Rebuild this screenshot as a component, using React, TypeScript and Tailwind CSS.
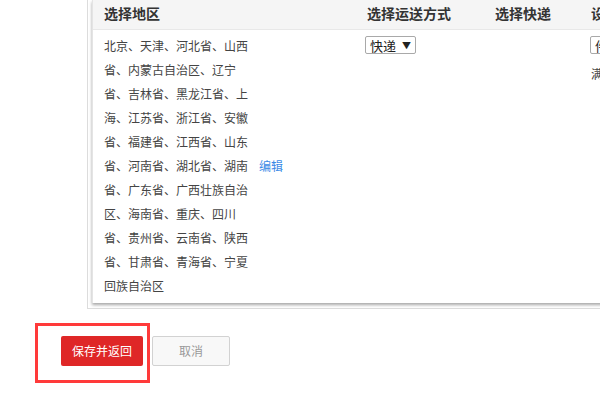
import React from "react";

const regions =
  "北京、天津、河北省、山西省、内蒙古自治区、辽宁省、吉林省、黑龙江省、上海、江苏省、浙江省、安徽省、福建省、江西省、山东省、河南省、湖北省、湖南省、广东省、广西壮族自治区、海南省、重庆、四川省、贵州省、云南省、陕西省、甘肃省、青海省、宁夏回族自治区";

function FakeSelect({ label }: { label: string }) {
  return (
    <div className="inline-flex items-center h-[18px] border border-[#a9a9a9] rounded-[2px] bg-white pl-[4px] pr-[4px] text-[13px] leading-none text-[#222] whitespace-nowrap">
      <span>{label}</span>
      <span className="ml-[6px] text-[9px]">▼</span>
    </div>
  );
}

export default function App() {
  return (
    <div
      className="relative w-[600px] h-[400px] overflow-hidden bg-white"
      style={{ fontFamily: '"Noto Sans CJK SC", "Noto Sans", sans-serif' }}
    >
      {/* outer frame */}
      <div className="ml-[87px] w-[620px] border-l border-b border-[#dcdcdc] pl-[4px] pb-[5px]">
        <div className="bg-white border-l border-[#e4e4e4] shadow-[0_2px_3px_rgba(0,0,0,0.35)]">
          {/* header */}
          <div className="flex h-[30px] bg-[#f5f5f5] border-b border-[#e8e8e8] text-[14px] font-bold text-[#333] pb-[3px] items-center">
            <div className="w-[263px] pl-[11px]">选择地区</div>
            <div className="w-[128px] pl-[11px]">选择运送方式</div>
            <div className="w-[96px] pl-[11px]">选择快递</div>
            <div className="pl-[11px] whitespace-nowrap">设置运费</div>
          </div>
          {/* body row */}
          <div className="flex text-[12px] text-[#444]">
            <div className="w-[263px] pl-[11px] pt-[4px] pb-[5px] flex items-center">
              <div className="w-[150px] leading-[24px]">{regions}</div>
              <a className="ml-[5px] text-[#3b8ae6] cursor-pointer">编辑</a>
            </div>
            <div className="w-[128px] pl-[9px] pt-[6px]">
              <FakeSelect label="快递" />
            </div>
            <div className="w-[96px]" />
            <div className="pl-[10px] pt-[6px] whitespace-nowrap">
              <FakeSelect label="件数" />
              <div className="mt-[10px] pl-[1px]">满 件，运费 元</div>
            </div>
          </div>
        </div>
      </div>

      {/* buttons */}
      <div className="flex gap-[9px] pl-[61px] mt-[27px]">
        <button className="w-[82px] h-[30px] rounded-[2px] bg-[#df2727] text-white text-[12px]">
          保存并返回
        </button>
        <button className="w-[78px] h-[30px] rounded-[2px] bg-[#f8f8f8] border border-[#d2d2d2] text-[#999] text-[12px]">
          取消
        </button>
      </div>

      {/* annotation highlight */}
      <div className="absolute left-[35px] top-[323px] w-[115px] h-[60px] border-[3px] border-[#ff3a3a] pointer-events-none" />
    </div>
  );
}
